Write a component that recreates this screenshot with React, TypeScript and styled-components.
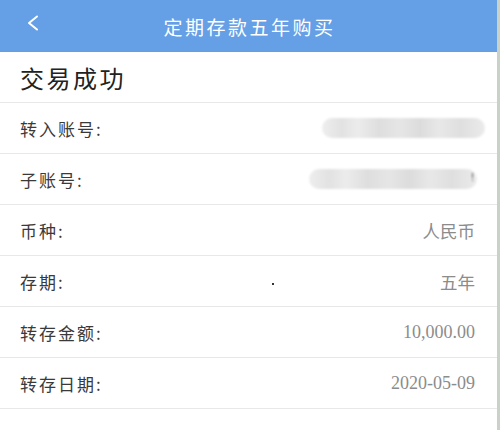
import * as React from "react";
import styled, { createGlobalStyle } from "styled-components";

const GlobalStyle = createGlobalStyle`
  html, body {
    margin: 0;
    padding: 0;
    background: #ffffff;
  }
  body {
    font-family: "Noto Sans CJK SC", "Noto Sans", sans-serif;
  }
`;

const Page = styled.div`
  display: flex;
  width: 500px;
  height: 430px;
  overflow: hidden;
`;

const Screen = styled.div`
  flex: 1;
  display: flex;
  flex-direction: column;
  background: #ffffff;
`;

const EdgeStrip = styled.div`
  width: 3px;
  background: #c9d1c9;
`;

const Header = styled.div`
  position: relative;
  height: 52px;
  display: flex;
  align-items: center;
  justify-content: center;
  background: #659fe6;
`;

const BackButton = styled.div`
  position: absolute;
  left: 26px;
  top: 15px;
  width: 14px;
  height: 16px;
  display: flex;
`;

const HeaderTitle = styled.h1`
  margin: 0;
  font-size: 19px;
  font-weight: 400;
  letter-spacing: 2.5px;
  color: #ffffff;
  padding-left: 2px;
`;

const StatusRow = styled.div`
  height: 50px;
  display: flex;
  align-items: center;
  padding: 0 20px;
  border-bottom: 1px solid #e8e8e8;
`;

const StatusText = styled.div`
  font-size: 24px;
  letter-spacing: 2.5px;
  color: #222222;
`;

const Row = styled.div`
  position: relative;
  height: 50px;
  display: flex;
  align-items: center;
  justify-content: space-between;
  padding: 0 22px 0 20px;
  border-bottom: 1px solid #e8e8e8;
`;

const Label = styled.span`
  font-size: 17px;
  letter-spacing: 2px;
  color: #3a3a3a;
`;

const Value = styled.span<{ $serif?: boolean }>`
  font-family: ${(p) =>
    p.$serif ? `"Liberation Serif", serif` : `"Noto Sans CJK SC", sans-serif`};
  font-size: ${(p) => (p.$serif ? "18px" : "17.5px")};
  color: #8c8c8c;
`;

const Masked = styled.span<{ $width: number; $shift: number }>`
  position: relative;
  display: block;
  width: ${(p) => p.$width}px;
  height: 20px;
  margin-right: ${(p) => p.$shift}px;
  border-radius: 10px;
  background: linear-gradient(
    90deg,
    #eeeeee 0%,
    #e2e2e2 12%,
    #ececec 22%,
    #dedede 35%,
    #e6e6e6 48%,
    #dcdcdc 60%,
    #e8e8e8 72%,
    #dfdfdf 85%,
    #ebebeb 100%
  );
  filter: blur(1px);
`;

const Speck = styled.span`
  position: absolute;
  left: 272px;
  top: 27px;
  width: 2px;
  height: 2px;
  background: #333333;
`;

const Tick = styled.span`
  position: absolute;
  right: 3px;
  top: 1px;
  font-family: "Liberation Sans", sans-serif;
  font-size: 11px;
  line-height: 14px;
  color: #555555;
`;

const rows = [
  { label: "转入账号:", mask: { width: 163, shift: -10 } },
  { label: "子账号:", mask: { width: 168, shift: -2 }, tick: true },
  { label: "币种:", value: "人民币" },
  { label: "存期:", value: "五年", speck: true },
  { label: "转存金额:", value: "10,000.00", serif: true },
  { label: "转存日期:", value: "2020-05-09", serif: true },
];

export default function App() {
  return (
    <Page>
      <GlobalStyle />
      <Screen>
        <Header>
          <BackButton>
            <svg width="14" height="16" viewBox="0 0 14 16">
              <path
                d="M11 1.5 L3 8 L11 14.5"
                fill="none"
                stroke="#ffffff"
                strokeWidth="2"
                strokeLinecap="round"
                strokeLinejoin="round"
              />
            </svg>
          </BackButton>
          <HeaderTitle>定期存款五年购买</HeaderTitle>
        </Header>
        <StatusRow>
          <StatusText>交易成功</StatusText>
        </StatusRow>
        {rows.map((r) => (
          <Row key={r.label}>
            <Label>{r.label}</Label>
            {r.speck && <Speck />}
            {r.mask ? (
              <Masked $width={r.mask.width} $shift={r.mask.shift}>
                {r.tick && <Tick>!</Tick>}
              </Masked>
            ) : (
              <Value $serif={r.serif}>{r.value}</Value>
            )}
          </Row>
        ))}
      </Screen>
      <EdgeStrip />
    </Page>
  );
}
